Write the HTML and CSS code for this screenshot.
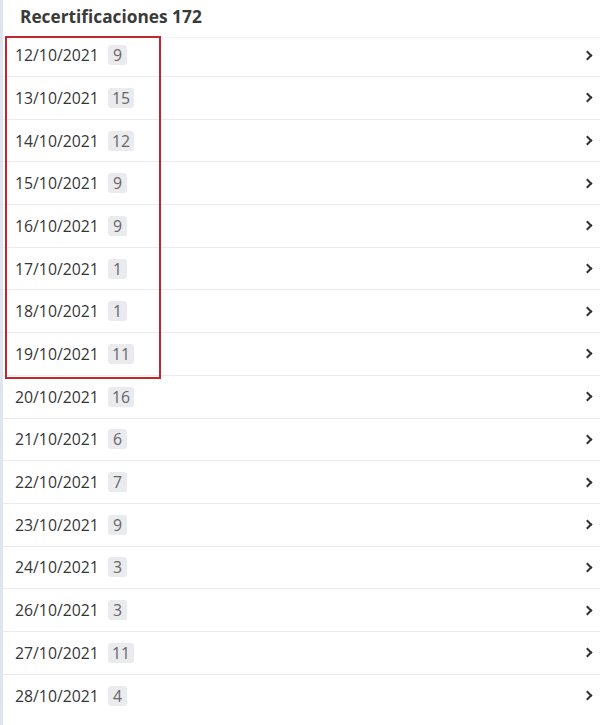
FILE: index.html
```html
<!DOCTYPE html>
<html lang="es">
<head>
<meta charset="utf-8">
<link rel="stylesheet" href="styles.css">
</head>
<body>
<div class="panel">
  <div class="panel-header">Recertificaciones 172</div>
  <div class="viewport">
    <ul class="list">
      <li class="row"><span class="date">12/10/2021</span><span class="badge">9</span><span class="chev"></span></li>
      <li class="row"><span class="date">13/10/2021</span><span class="badge">15</span><span class="chev"></span></li>
      <li class="row"><span class="date">14/10/2021</span><span class="badge">12</span><span class="chev"></span></li>
      <li class="row"><span class="date">15/10/2021</span><span class="badge">9</span><span class="chev"></span></li>
      <li class="row"><span class="date">16/10/2021</span><span class="badge">9</span><span class="chev"></span></li>
      <li class="row"><span class="date">17/10/2021</span><span class="badge">1</span><span class="chev"></span></li>
      <li class="row"><span class="date">18/10/2021</span><span class="badge">1</span><span class="chev"></span></li>
      <li class="row"><span class="date">19/10/2021</span><span class="badge">11</span><span class="chev"></span></li>
      <li class="row"><span class="date">20/10/2021</span><span class="badge">16</span><span class="chev"></span></li>
      <li class="row"><span class="date">21/10/2021</span><span class="badge">6</span><span class="chev"></span></li>
      <li class="row"><span class="date">22/10/2021</span><span class="badge">7</span><span class="chev"></span></li>
      <li class="row"><span class="date">23/10/2021</span><span class="badge">9</span><span class="chev"></span></li>
      <li class="row"><span class="date">24/10/2021</span><span class="badge">3</span><span class="chev"></span></li>
      <li class="row"><span class="date">26/10/2021</span><span class="badge">3</span><span class="chev"></span></li>
      <li class="row"><span class="date">27/10/2021</span><span class="badge">11</span><span class="chev"></span></li>
      <li class="row row-last"><span class="date">28/10/2021</span><span class="badge">4</span><span class="chev"></span></li>
    </ul>
  </div>
  <div class="highlight"></div>
</div>
</body>
</html>
```
FILE: styles.css
```css
* { box-sizing: border-box; }
html, body { margin: 0; padding: 0; background: #fff; }
body {
  width: 611px;
  height: 725px;
  overflow: hidden;
  font-family: "Open Sans", "Noto Sans", sans-serif;
  color: #333;
}
.panel {
  position: relative;
  width: 600px;
  height: 725px;
  border-left: 3px solid #dfe4ed;
  display: flex;
  flex-direction: column;
}
.panel-header {
  height: 38px;
  flex: none;
  padding: 5px 0 0 17px;
  font-size: 17.3px;
  font-weight: 700;
  line-height: 24px;
  color: #3a3a3a;
  border-bottom: 1px solid #f3f3f3;
}
.viewport {
  flex: 1;
  overflow: hidden;
}
.list {
  list-style: none;
  margin: -3.7px 0 0 0;
  padding: 0;
}
.row {
  height: 42.7px;
  display: flex;
  align-items: center;
  padding: 0 0 0 12px;
  border-bottom: 1px solid #ececec;
  font-size: 15.8px;
}
.row-last { border-bottom: none; }
.date {
  width: 93px;
  color: #363636;
}
.badge {
  display: inline-block;
  min-width: 19px;
  height: 20px;
  padding: 0 4px;
  border-radius: 3px;
  background: #e9ebee;
  color: #666;
  font-size: 15.8px;
  line-height: 20px;
  text-align: center;
}
.chev {
  margin-left: auto;
  margin-right: 9px;
  width: 7px;
  height: 7px;
  border-top: 2.5px solid #333;
  border-right: 2.5px solid #333;
  transform: rotate(45deg);
}
.highlight {
  position: absolute;
  left: 2px;
  top: 36px;
  width: 156px;
  height: 343px;
  border: 2px solid #c1272d;
  pointer-events: none;
}
```
